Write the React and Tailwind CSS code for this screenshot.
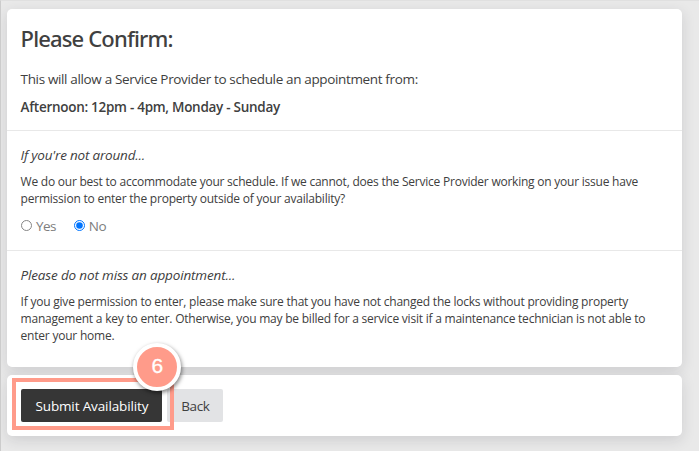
import React, { useState } from 'react';

const Card = ({ className = '', children }) => (
  <div className={`w-[675px] rounded-[5px] bg-white shadow-[0_4px_14px_rgba(40,40,60,0.14)] ${className}`}>
    {children}
  </div>
);

const Radio = ({ label, checked, onChange, className }) => (
  <label className="flex items-center gap-[4px] text-[13.5px] leading-5 text-[#7d7d7d]">
    <input type="radio" name="permission" checked={checked} onChange={onChange} className="sr-only" />
    <svg width="11" height="11" viewBox="0 0 11 11" className="relative -top-px">
      <circle cx="5.5" cy="5.5" r="5" fill="#fff" stroke={checked ? '#0075ff' : '#858585'} strokeWidth="1" />
      {checked && <circle cx="5.5" cy="5.5" r="3.3" fill="#0075ff" />}
    </svg>
    <span className={className}>{label}</span>
  </label>
);

const App = () => {
  const [permission, setPermission] = useState('no');

  return (
    <div className="h-[451px] w-[699px] overflow-hidden border-l border-t border-l-[#cccccc] border-t-[#e0e0e0] bg-[#e9e9e9] pl-[6.4px] pt-[8px] font-['Open_Sans','Noto_Sans',sans-serif] text-[#404040]">
      {/* Confirmation */}
      <Card className="h-[358px] whitespace-nowrap">
        <section className="h-[122px] border-b border-[#e8e8e8] px-[13.2px] pt-[14px]">
          <h1 className="font-['Noto_Sans','Open_Sans',sans-serif] text-[22px] font-medium leading-[30px] tracking-[-0.85px]">Please Confirm:</h1>
          <p className="mt-[16px] text-[13.5px] leading-5 tracking-[-0.35px]">This will allow a Service Provider to schedule an appointment from:</p>
          <p className="mt-2 text-[13.5px] font-semibold leading-5 tracking-[-0.28px]">Afternoon: 12pm - 4pm, Monday - Sunday</p>
        </section>

        <section className="h-[120px] border-b border-[#e8e8e8] px-[13.2px] pt-[14px]">
          <h2 className="text-[13.5px] italic leading-5 tracking-[-0.2px]">If you're not around...</h2>
          <div className="mt-2 text-[12px] leading-[17px]">
            <p className="tracking-[-0.23px]">We do our best to accommodate your schedule. If we cannot, does the Service Provider working on your issue have</p>
            <p className="tracking-[-0.22px]">permission to enter the property outside of your availability?</p>
          </div>
          <div className="mt-[9px] flex gap-[18px] pl-[0.4px]">
            <Radio label="Yes" checked={permission === 'yes'} onChange={() => setPermission('yes')} className="tracking-[-0.6px]" />
            <Radio label="No" checked={permission === 'no'} onChange={() => setPermission('no')} className="tracking-[-0.3px]" />
          </div>
        </section>

        <section className="px-[13.2px] pt-[14px]">
          <h2 className="text-[13.5px] italic leading-5 tracking-[-0.16px]">Please do not miss an appointment...</h2>
          <div className="mt-2 text-[12px] leading-[17px]">
            <p className="tracking-[-0.22px]">If you give permission to enter, please make sure that you have not changed the locks without providing property</p>
            <p className="tracking-[-0.22px]">management a key to enter. Otherwise, you may be billed for a service visit if a maintenance technician is not able to</p>
            <p className="tracking-[-0.22px]">enter your home.</p>
          </div>
        </section>
      </Card>

      {/* Actions */}
      <Card className="mt-2 h-[61px] pl-[14px] pt-[14px]">
        <div className="relative flex gap-[5px] text-[13.5px]">
          <button className="h-[33px] w-[141px] rounded-[2px] bg-[#363636] pt-[2px] tracking-[-0.13px] text-white">Submit Availability</button>
          <button className="h-[33px] w-[56px] rounded-[2px] bg-[#e2e3e5] pt-[2px] tracking-[-0.4px]">Back</button>

          {/* Step callout */}
          <div className="absolute -left-[9px] -top-[11px] h-[52px] w-[162px] border-4 border-[#ff9b8a]" />
          <div className="absolute left-[112px] -top-[46px] flex h-[48px] w-[48px] items-center justify-center rounded-full border-4 border-white bg-[#ff9b8a] pb-[3px] font-['Liberation_Sans',sans-serif] text-[21px] text-white shadow-[1px_2px_4px_rgba(0,0,0,0.5)] [-webkit-text-stroke:0.3px_#fff]">
            6
          </div>
        </div>
      </Card>
    </div>
  );
};

export default App;
